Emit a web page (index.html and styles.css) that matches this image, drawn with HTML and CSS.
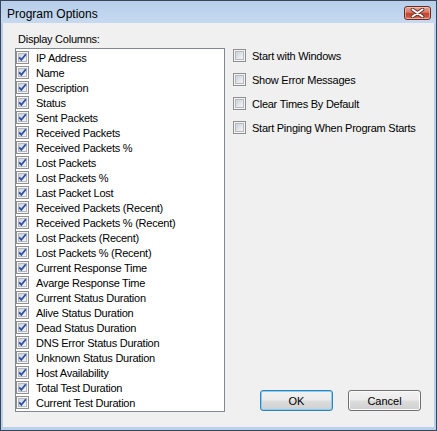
FILE: index.html
```html
<!DOCTYPE html>
<html>
<head>
<meta charset="utf-8">
<link rel="stylesheet" href="styles.css">
</head>
<body>
<svg class="defs" width="0" height="0">
  <defs>
    <linearGradient id="cbfill" x1="0" y1="0" x2="1" y2="1">
      <stop offset="0" stop-color="#cbcfd5"/>
      <stop offset="1" stop-color="#f7f8f9"/>
    </linearGradient>
    <symbol id="cb" viewBox="0 0 13 13">
      <rect x="0.5" y="0.5" width="12" height="12" fill="#f5f5f5" stroke="#8e8f8f"/>
      <rect x="2.5" y="2.5" width="8" height="8" fill="url(#cbfill)" stroke="#b3b8be"/>
    </symbol>
    <symbol id="cbc" viewBox="0 0 13 13">
      <rect x="0.5" y="0.5" width="12" height="12" fill="#f5f5f5" stroke="#8e8f8f"/>
      <rect x="2.5" y="2.5" width="8" height="8" fill="url(#cbfill)" stroke="#b3b8be"/>
      <path d="M3.2 6.4 L5.3 8.9 L9.9 3.3" fill="none" stroke="#2c50a8" stroke-width="1.8"/>
    </symbol>
  </defs>
</svg>
<div class="window">
  <div class="titlebar">
    <span class="title">Program Options</span>
    <span class="close">
      <svg width="15" height="10" viewBox="0 0 15 10">
        <path d="M2.5 1.5 L12.5 8.5 M12.5 1.5 L2.5 8.5" stroke="#5a2a2a" stroke-width="3.6" stroke-linecap="round"/>
        <path d="M2.5 1.5 L12.5 8.5 M12.5 1.5 L2.5 8.5" stroke="#ffffff" stroke-width="2" stroke-linecap="round"/>
      </svg>
    </span>
  </div>
  <div class="client">
    <div class="left">
      <div class="label">Display Columns:</div>
      <ul class="list">
        <li class="item"><svg class="cb"><use href="#cbc"/></svg><span>IP Address</span></li>
        <li class="item"><svg class="cb"><use href="#cbc"/></svg><span>Name</span></li>
        <li class="item"><svg class="cb"><use href="#cbc"/></svg><span>Description</span></li>
        <li class="item"><svg class="cb"><use href="#cbc"/></svg><span>Status</span></li>
        <li class="item"><svg class="cb"><use href="#cbc"/></svg><span>Sent Packets</span></li>
        <li class="item"><svg class="cb"><use href="#cbc"/></svg><span>Received Packets</span></li>
        <li class="item"><svg class="cb"><use href="#cbc"/></svg><span>Received Packets %</span></li>
        <li class="item"><svg class="cb"><use href="#cbc"/></svg><span>Lost Packets</span></li>
        <li class="item"><svg class="cb"><use href="#cbc"/></svg><span>Lost Packets %</span></li>
        <li class="item"><svg class="cb"><use href="#cbc"/></svg><span>Last Packet Lost</span></li>
        <li class="item"><svg class="cb"><use href="#cbc"/></svg><span>Received Packets (Recent)</span></li>
        <li class="item"><svg class="cb"><use href="#cbc"/></svg><span>Received Packets % (Recent)</span></li>
        <li class="item"><svg class="cb"><use href="#cbc"/></svg><span>Lost Packets (Recent)</span></li>
        <li class="item"><svg class="cb"><use href="#cbc"/></svg><span>Lost Packets % (Recent)</span></li>
        <li class="item"><svg class="cb"><use href="#cbc"/></svg><span>Current Response Time</span></li>
        <li class="item"><svg class="cb"><use href="#cbc"/></svg><span>Avarge Response Time</span></li>
        <li class="item"><svg class="cb"><use href="#cbc"/></svg><span>Current Status Duration</span></li>
        <li class="item"><svg class="cb"><use href="#cbc"/></svg><span>Alive Status Duration</span></li>
        <li class="item"><svg class="cb"><use href="#cbc"/></svg><span>Dead Status Duration</span></li>
        <li class="item"><svg class="cb"><use href="#cbc"/></svg><span>DNS Error Status Duration</span></li>
        <li class="item"><svg class="cb"><use href="#cbc"/></svg><span>Unknown Status Duration</span></li>
        <li class="item"><svg class="cb"><use href="#cbc"/></svg><span>Host Availability</span></li>
        <li class="item"><svg class="cb"><use href="#cbc"/></svg><span>Total Test Duration</span></li>
        <li class="item"><svg class="cb"><use href="#cbc"/></svg><span>Current Test Duration</span></li>
      </ul>
    </div>
    <div class="right">
      <div class="options">
        <div class="opt"><svg class="cb"><use href="#cb"/></svg><span>Start with Windows</span></div>
        <div class="opt"><svg class="cb"><use href="#cb"/></svg><span>Show Error Messages</span></div>
        <div class="opt"><svg class="cb"><use href="#cb"/></svg><span>Clear Times By Default</span></div>
        <div class="opt"><svg class="cb"><use href="#cb"/></svg><span>Start Pinging When Program Starts</span></div>
      </div>
      <div class="buttons">
        <div class="btn default">OK</div>
        <div class="btn">Cancel</div>
      </div>
    </div>
  </div>
</div>
</body>
</html>
```
FILE: styles.css
```css
body {
  margin: 0;
  font-family: "Liberation Sans", Arial, sans-serif;
  font-size: 11px;
  color: #000;
  background: #fff;
}
.defs {
  position: absolute;
  width: 0;
  height: 0;
}
.window {
  width: 437px;
  height: 431px;
  box-sizing: border-box;
  border: 1px solid #3a4657;
  background: #b9d0ec;
  padding: 0 2px 3px 2px;
  display: flex;
  flex-direction: column;
}
.titlebar {
  height: 22px;
  flex: none;
  display: flex;
  align-items: flex-start;
  justify-content: space-between;
  background: linear-gradient(#b7cfeb, #c6d9f0);
  margin: 0 -2px;
  padding: 0 5px 0 6px;
}
.title {
  font-size: 12px;
  line-height: 12px;
  margin-top: 7px;
  color: #000;
}
.close {
  margin-top: 5px;
  width: 27px;
  height: 14px;
  box-sizing: border-box;
  border: 1px solid #6b2a24;
  border-radius: 3px;
  background: linear-gradient(#e4a593 0%, #d47a68 45%, #c4422f 50%, #c9533f 80%, #e08a73 100%);
  display: flex;
  align-items: center;
  justify-content: center;
  box-shadow: inset 0 0 0 1px rgba(255, 220, 210, 0.5);
}
.close svg {
  display: block;
}
.client {
  flex: 1;
  background: #f0f0f0;
  display: flex;
  letter-spacing: -0.25px;
}
.left {
  padding-left: 12px;
  width: 210px;
  flex: none;
}
.label {
  margin-top: 10px;
  margin-bottom: 2px;
  padding-left: 3px;
  line-height: 13px;
}
.list {
  list-style: none;
  margin: 0;
  padding: 1px 0 0 0;
  width: 210px;
  height: 364px;
  box-sizing: border-box;
  border: 1px solid #828790;
  background: #fff;
}
.item {
  height: 15px;
  display: flex;
  align-items: center;
  gap: 7px;
  white-space: nowrap;
}
.cb {
  width: 13px;
  height: 13px;
  flex: none;
  display: block;
}
.right {
  margin-left: 8px;
  flex: 1;
  display: flex;
  flex-direction: column;
  padding: 25px 13px 16px 0;
}
.opt {
  height: 15px;
  display: flex;
  align-items: center;
  gap: 6px;
  margin-bottom: 9px;
  white-space: nowrap;
}
.buttons {
  margin-top: auto;
  display: flex;
  justify-content: flex-end;
  gap: 15px;
}
.btn {
  width: 73px;
  height: 21px;
  box-sizing: border-box;
  border: 1px solid #707070;
  border-radius: 3px;
  background: linear-gradient(#f2f2f2 0%, #ebebeb 48%, #dddddd 52%, #cfcfcf 100%);
  box-shadow: inset 0 0 0 1px #fbfbfb;
  display: flex;
  align-items: center;
  justify-content: center;
  letter-spacing: 0;
}
.btn.default {
  border-color: #3c7fb1;
  box-shadow: inset 0 0 0 1px #7fd1f7;
}
```
